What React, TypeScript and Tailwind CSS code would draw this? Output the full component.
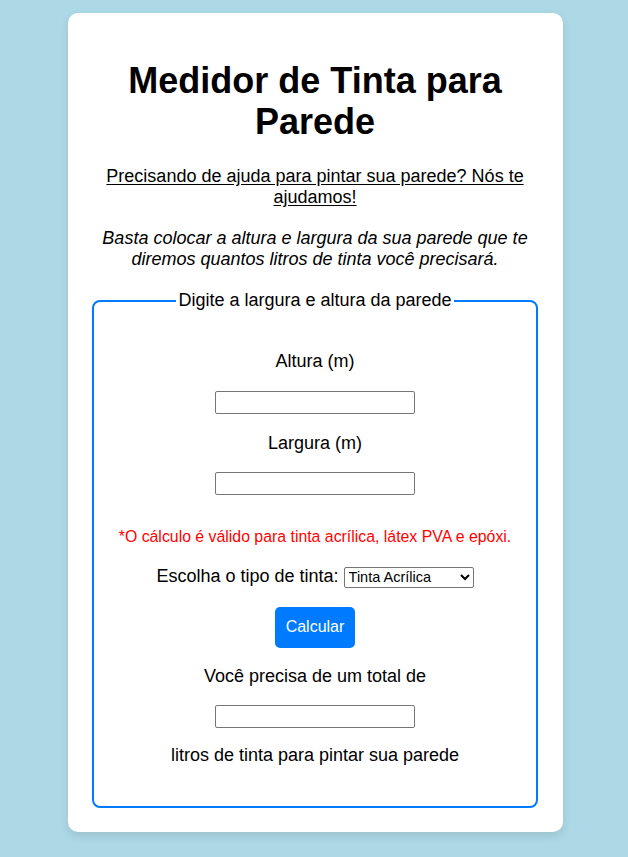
import React from "react";

const inputClass =
  "block w-[200px] h-[23px] border border-[#767676] rounded-[2px] bg-white px-[2px] text-[13.33px] outline-none";

export default function App() {
  return (
    <div className="min-h-[857px] bg-[#add8e6] pt-[13px] pb-[25px] pl-[3px] flex justify-center items-start font-['Liberation_Sans',Arial,sans-serif] text-black">
      <div className="w-[495px] bg-white rounded-[10px] pt-[24px] pb-[24px] pl-[24px] pr-[25px] shadow-[0_4px_10px_rgba(0,0,0,0.1)] text-center">
        <h1 className="mt-[23px] text-[36px] leading-[41px] font-bold">
          Medidor de Tinta para Parede
        </h1>
        <p className="mt-[24px] text-[18px] leading-[21px] underline underline-offset-[2px]">
          Precisando de ajuda para pintar sua parede? Nós te ajudamos!
        </p>
        <p className="mt-[20px] text-[18px] leading-[21px] italic">
          Basta colocar a altura e largura da sua parede que te diremos quantos litros de tinta você precisará.
        </p>

        <fieldset className="mt-[20px] border-2 border-[#007bff] rounded-[8px] pt-[40px] pb-[40px] flex flex-col items-center">
          <legend className="mx-auto px-[2px] text-[18px] leading-[21px]">
            Digite a largura e altura da parede
          </legend>

          <label htmlFor="altura" className="block text-[18px] leading-[21px]">
            Altura (m)
          </label>
          <input id="altura" type="text" className={`${inputClass} mt-[19px]`} />

          <label htmlFor="largura" className="block mt-[19px] text-[18px] leading-[21px]">
            Largura (m)
          </label>
          <input id="largura" type="text" className={`${inputClass} mt-[18px]`} />

          <p className="mt-[33px] text-[15.85px] leading-[18px] text-[#ff0000]">
            *O cálculo é válido para tinta acrílica, látex PVA e epóxi.
          </p>

          <div className="mt-[20px] text-[18px] leading-[21px]">
            Escolha o tipo de tinta:{" "}
            <select
              defaultValue="acrilica"
              className="w-[130px] h-[21px] border border-[#767676] rounded-[2px] bg-white text-[14.5px] leading-[17px] align-baseline"
            >
              <option value="acrilica">Tinta Acrílica</option>
              <option value="pva">Látex PVA</option>
              <option value="epoxi">Epóxi</option>
            </select>
          </div>

          <button
            type="button"
            className="mt-[19px] h-[41px] px-[11px] rounded-[5px] bg-[#007bff] text-white text-[16px] leading-[18px]"
          >
            Calcular
          </button>

          <p className="mt-[18px] text-[18px] leading-[21px]">Você precisa de um total de</p>
          <input type="text" readOnly className={`${inputClass} mt-[18px]`} />
          <p className="mt-[17px] text-[18px] leading-[21px]">litros de tinta para pintar sua parede</p>
        </fieldset>
      </div>
    </div>
  );
}
